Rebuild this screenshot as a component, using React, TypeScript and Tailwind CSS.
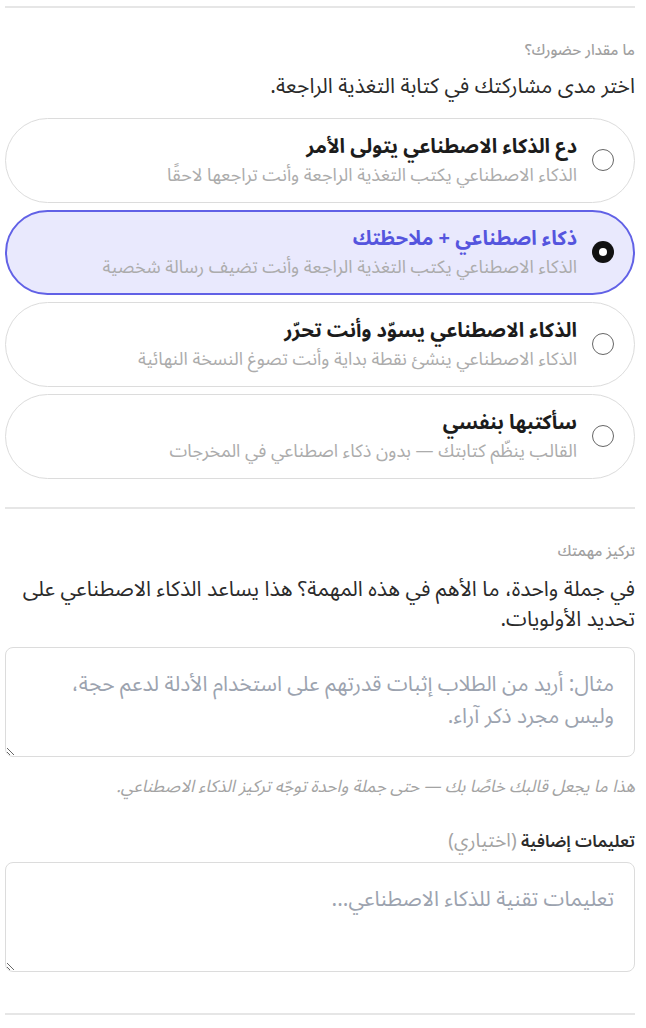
import { useState } from "react";

// ── Options ───────────────────────────────────────────────────────────────────

interface PresenceOption {
  id: string;
  title: string;
  body: string;
}

const OPTIONS: PresenceOption[] = [
  {
    id: "ai-full",
    title: "دع الذكاء الاصطناعي يتولى الأمر",
    body: "الذكاء الاصطناعي يكتب التغذية الراجعة وأنت تراجعها لاحقًا",
  },
  {
    id: "ai-note",
    title: "ذكاء اصطناعي + ملاحظتك",
    body: "الذكاء الاصطناعي يكتب التغذية الراجعة وأنت تضيف رسالة شخصية",
  },
  {
    id: "ai-draft",
    title: "الذكاء الاصطناعي يسوّد وأنت تحرّر",
    body: "الذكاء الاصطناعي ينشئ نقطة بداية وأنت تصوغ النسخة النهائية",
  },
  {
    id: "self",
    title: "سأكتبها بنفسي",
    body: "القالب ينظّم كتابتك — بدون ذكاء اصطناعي في المخرجات",
  },
];

function Radio({ checked }: { checked: boolean }) {
  if (checked) {
    return (
      <span className="flex h-[22px] w-[22px] shrink-0 items-center justify-center rounded-full bg-[#111]">
        <span className="h-[8px] w-[8px] rounded-full bg-white" />
      </span>
    );
  }
  return <span className="h-[22px] w-[22px] shrink-0 rounded-full border border-[#666] bg-white" />;
}

export default function App() {
  const [presence, setPresence] = useState("ai-note");

  return (
    <div
      dir="rtl"
      className="min-h-screen bg-white pl-[5px] pr-[11px] pt-[6px] font-['Noto_Sans_Arabic','Noto_Sans','DejaVu_Sans',sans-serif] text-[#2b2b2b]"
    >
      <div className="border-t-2 border-[#e6e6e6]" />

      {/* Presence */}
      <section className="pt-8">
        <div className="text-[15px] font-medium leading-5 text-[#a0a0a0]">ما مقدار حضورك؟</div>
        <p className="mt-3 text-[21px] leading-7">اختر مدى مشاركتك في كتابة التغذية الراجعة.</p>

        <div className="mt-[18px] flex flex-col gap-[7px]">
          {OPTIONS.map((opt) => {
            const active = presence === opt.id;
            return (
              <button
                key={opt.id}
                type="button"
                onClick={() => setPresence(opt.id)}
                className={
                  active
                    ? "flex items-center gap-[15px] rounded-full border-2 border-[#6161e6] bg-[#e9e9fd] pb-[15px] pl-6 pr-[19px] pt-[13px] text-right"
                    : "flex items-center gap-[15px] rounded-full border border-[#dcdcdc] bg-white pb-4 pl-6 pr-5 pt-[14px] text-right"
                }
              >
                <Radio checked={active} />
                <div className="min-w-0">
                  <div
                    className={
                      active
                        ? "text-[20px] font-bold leading-7 text-[#5555de]"
                        : "text-[20px] font-bold leading-7 text-[#1c1c1c]"
                    }
                  >
                    {opt.title}
                  </div>
                  <div className="mt-[3px] text-[18px] leading-[22px] text-[#acacac]">{opt.body}</div>
                </div>
              </button>
            );
          })}
        </div>
      </section>

      <div className="mt-[28px] border-t-2 border-[#e6e6e6]" />

      {/* Focus */}
      <section className="pt-8">
        <div className="text-[15px] font-medium leading-5 text-[#a0a0a0]">تركيز مهمتك</div>
        <p className="mt-[13px] text-[21px] leading-[30px]">
          في جملة واحدة، ما الأهم في هذه المهمة؟ هذا يساعد الذكاء الاصطناعي على تحديد الأولويات.
        </p>
        <textarea
          dir="rtl"
          className="mt-[13px] block h-[110px] w-full rounded-lg border border-[#dcdcdc] px-5 pt-[20px] text-[21px] leading-8 outline-none placeholder:text-[#9ca3af]"
          placeholder="مثال: أريد من الطلاب إثبات قدرتهم على استخدام الأدلة لدعم حجة، وليس مجرد ذكر آراء."
        />
        <p className="mt-[20px] text-[17px] italic leading-5 text-[#a3a3a3]">
          هذا ما يجعل قالبك خاصًا بك — حتى جملة واحدة توجّه تركيز الذكاء الاصطناعي.
        </p>

        <label className="mt-[34px] block text-[17px] font-semibold leading-5 text-[#2b2b2b]">
          تعليمات إضافية <span className="text-[19px] font-normal text-[#a3a3a3]">(اختياري)</span>
        </label>
        <textarea
          dir="rtl"
          className="mt-[10px] block h-[110px] w-full rounded-lg border border-[#dcdcdc] px-5 pt-[20px] text-[21px] leading-8 outline-none placeholder:text-[#9ca3af]"
          placeholder="تعليمات تقنية للذكاء الاصطناعي..."
        />
      </section>

      <div className="mt-[41px] border-t-2 border-[#e6e6e6]" />
    </div>
  );
}
